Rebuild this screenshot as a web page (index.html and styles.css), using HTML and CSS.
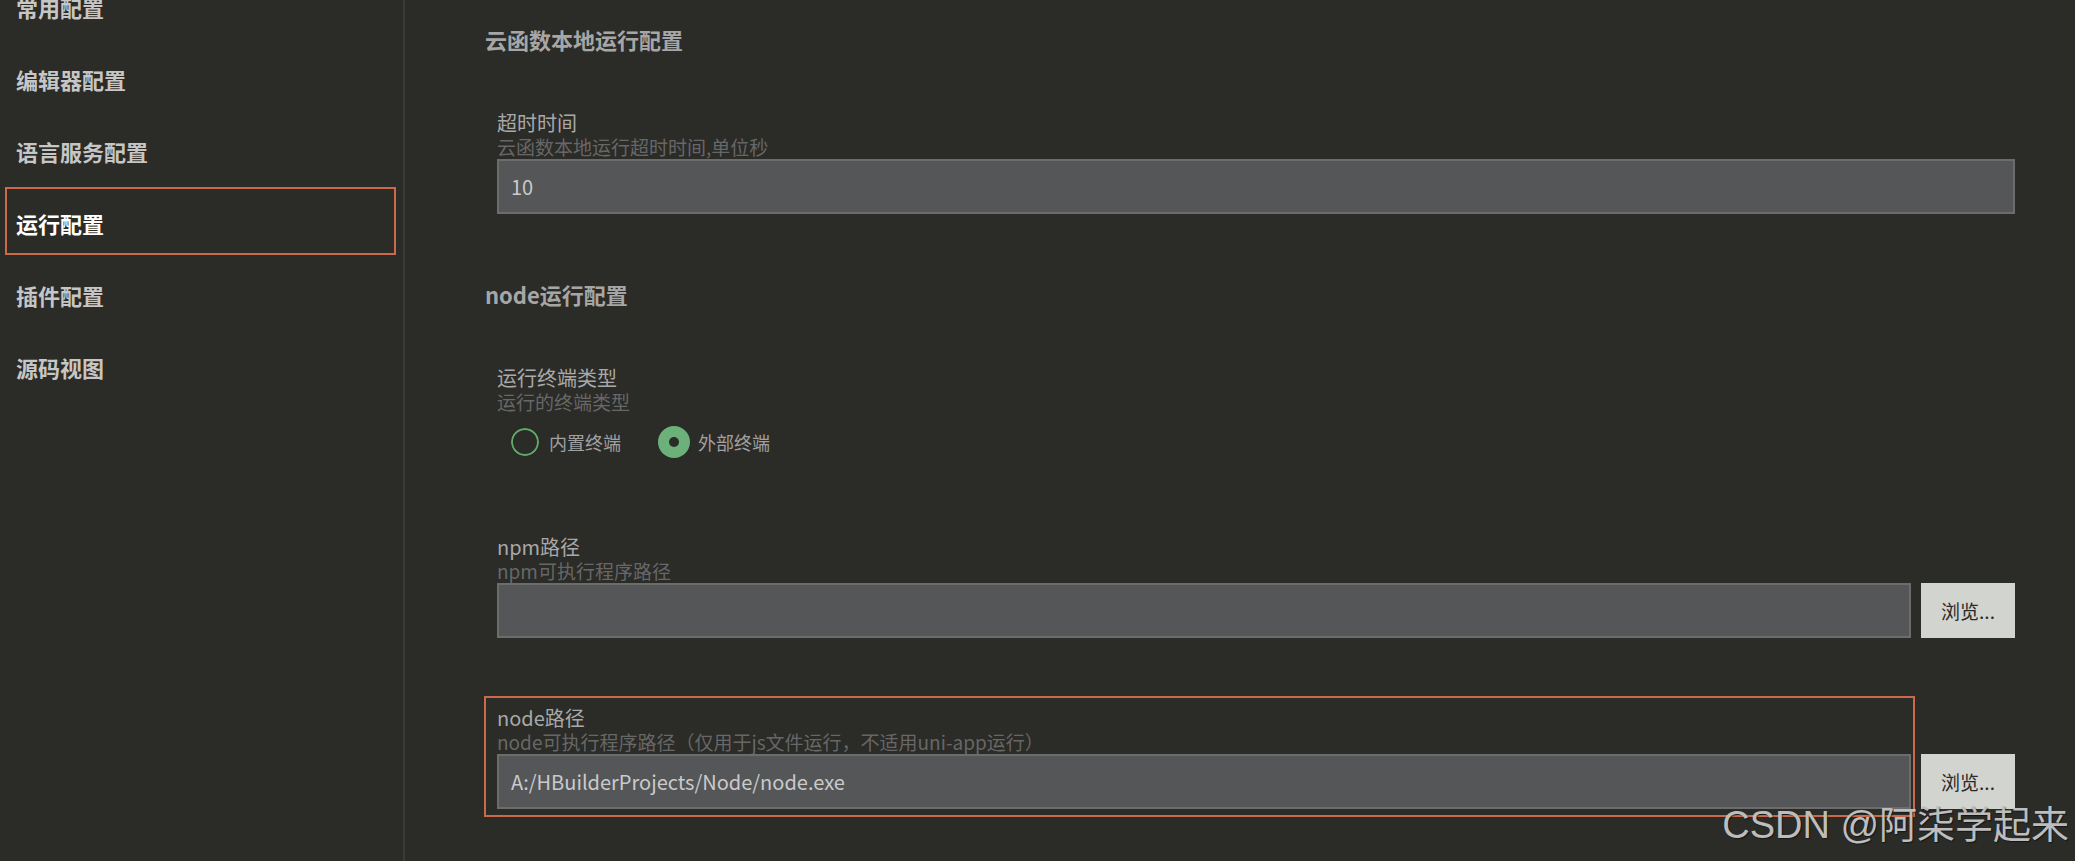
FILE: index.html
```html
<!DOCTYPE html>
<html lang="zh-CN">
<head>
  <meta charset="UTF-8">
  <title>设置 - 运行配置</title>
  <link rel="stylesheet" href="styles.css">
</head>
<body>

  <aside class="sidebar">
    <ul class="nav">
      <li class="nav-item">常用配置</li>
      <li class="nav-item">编辑器配置</li>
      <li class="nav-item">语言服务配置</li>
      <li class="nav-item active">运行配置</li>
      <li class="nav-item">插件配置</li>
      <li class="nav-item">源码视图</li>
    </ul>
  </aside>

  <main class="main">
    <h2 class="section-title">云函数本地运行配置</h2>

    <div class="field">
      <div class="field-label">超时时间</div>
      <div class="field-desc">云函数本地运行超时时间,单位秒</div>
      <div class="input-row">
        <div class="input">10</div>
      </div>
    </div>

    <h2 class="section-title second">node运行配置</h2>

    <div class="field">
      <div class="field-label">运行终端类型</div>
      <div class="field-desc">运行的终端类型</div>
      <div class="radio-group">
        <label class="radio-option">
          <span class="radio"></span>
          <span>内置终端</span>
        </label>
        <label class="radio-option">
          <span class="radio checked"></span>
          <span>外部终端</span>
        </label>
      </div>
    </div>

    <div class="field npm-field">
      <div class="field-label">npm路径</div>
      <div class="field-desc">npm可执行程序路径</div>
      <div class="input-row">
        <div class="input"></div>
        <button class="browse">浏览...</button>
      </div>
    </div>

    <div class="field node-field">
      <div class="field-label">node路径</div>
      <div class="field-desc">node可执行程序路径（仅用于js文件运行，不适用uni-app运行）</div>
      <div class="input-row">
        <div class="input">A:/HBuilderProjects/Node/node.exe</div>
        <button class="browse">浏览...</button>
      </div>
      <!-- annotation box drawn around the node path setting -->
      <div class="highlight"></div>
    </div>
  </main>

  <div class="watermark">CSDN @阿柒学起来</div>

</body>
</html>
```

FILE: styles.css
```css
body {
  margin: 0;
  padding: 0;
  height: 100vh;
  overflow: hidden;
  display: flex;
  background-color: #2b2b27;
  font-family: "Noto Sans CJK SC", "Noto Sans", sans-serif;
}

/* left menu */
.sidebar {
  width: 403px;
  flex-shrink: 0;
  border-right: 2px solid #3a3a36;
}
.nav {
  list-style: none;
  margin: -29px 0 0 0;
  padding: 0;
}
.nav-item {
  height: 68px;
  box-sizing: border-box;
  margin: 0 7px 4px 5px;
  padding: 3px 0 0 9px;
  display: flex;
  align-items: center;
  border: 2px solid transparent;
  font-size: 22px;
  font-weight: bold;
  color: #c6c6c6;
}
.nav-item.active {
  border-color: #cb6a4b;
  color: #ffffff;
}

/* settings */
.main {
  flex: 1;
  padding: 24px 60px 0 80px;
}
.section-title {
  margin: 0 0 57px 0;
  font-size: 22px;
  line-height: 30px;
  font-weight: bold;
  color: #a6a6a6;
}
.section-title.second {
  margin-top: 65px;
}
.field {
  margin-left: 12px;
  position: relative;
}
.field-label {
  font-size: 20px;
  line-height: 24px;
  color: #a9a9a9;
}
.field-desc {
  font-size: 19px;
  line-height: 24px;
  color: #676767;
}
.input-row {
  display: flex;
  gap: 10px;
}
.input {
  flex: 1;
  height: 55px;
  box-sizing: border-box;
  display: flex;
  align-items: center;
  padding: 0 12px;
  background-color: #555658;
  border: 2px solid #6c6c6c;
  font-size: 20px;
  color: #cacaca;
}
.browse {
  width: 94px;
  height: 55px;
  border: none;
  padding: 0;
  background-color: #d2d4d0;
  font-family: inherit;
  font-size: 19px;
  color: #2a2a2a;
}

/* radios */
.radio-group {
  display: flex;
  gap: 37px;
  margin-top: 12px;
  padding-left: 12px;
}
.radio-option {
  display: flex;
  align-items: center;
  gap: 8px;
  font-size: 18px;
  line-height: 32px;
  color: #a0a0a0;
}
.radio {
  width: 32px;
  height: 32px;
  box-sizing: border-box;
  border-radius: 50%;
  border: 2px solid #2b2b27;
  box-shadow: inset 0 0 0 2px #5fa96d;
  position: relative;
}
.radio.checked {
  border: none;
  box-shadow: none;
  background-color: #6cb07a;
}
.radio.checked::after {
  content: "";
  position: absolute;
  left: 11px;
  top: 11px;
  width: 10px;
  height: 10px;
  border-radius: 50%;
  background-color: #2b2b27;
}

.npm-field {
  margin-top: 77px;
}
.node-field {
  margin-top: 68px;
}
.highlight {
  position: absolute;
  top: -10px;
  left: -13px;
  right: 100px;
  bottom: -8px;
  border: 2px solid #cb6a4b;
  pointer-events: none;
}

.watermark {
  position: absolute;
  right: 6px;
  bottom: 17px;
  font-family: "Liberation Sans", "Noto Sans CJK SC", sans-serif;
  font-size: 38px;
  line-height: 38px;
  color: #bdbdbd;
  text-shadow: 1px 1px 1px rgba(0, 0, 0, 0.5);
}
```
